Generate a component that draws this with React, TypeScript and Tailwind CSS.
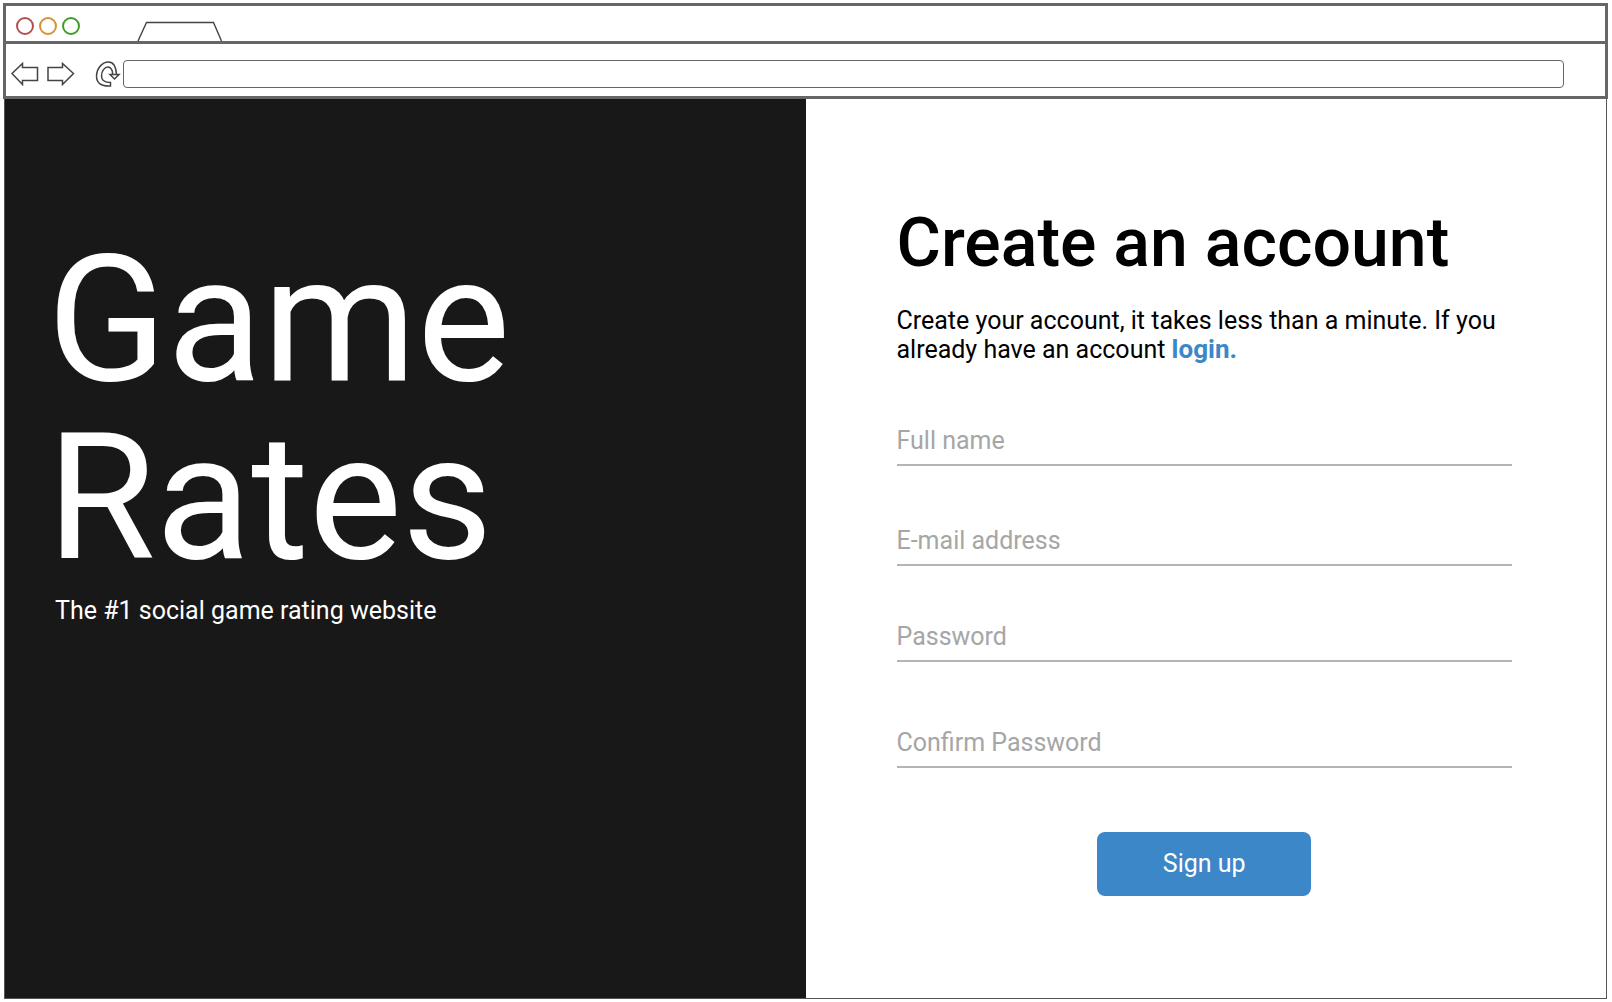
type FieldProps = { id: string; label: string; type: string; className?: string };

function Field({ id, label, type, className = "" }: FieldProps) {
  return (
    <div className={className}>
      <input
        id={id}
        name={id}
        type={type}
        aria-label={label}
        placeholder={label}
        className="block h-12 w-full border-b-2 border-[#b4b4b4] bg-transparent pb-0.5 text-[25px] leading-8 text-black outline-none placeholder:text-[#a6a6a6] placeholder:opacity-100"
      />
    </div>
  );
}

function BrowserBar() {
  return (
    <header className="border-[3px] border-[#666666] bg-white">
      <div className="box-content flex h-[35px] items-end border-b-[3px] border-[#666666]">
        <div className="flex gap-[5px] self-center pt-1 pl-[10px]">
          <span className="size-[18px] rounded-full border-2 border-[#b5504f]" />
          <span className="size-[18px] rounded-full border-2 border-[#d6903a]" />
          <span className="size-[18px] rounded-full border-2 border-[#3f9e2b]" />
        </div>
        <svg className="ml-[57px] h-5 w-[86px]" viewBox="0 0 86 20" fill="none" stroke="#444" strokeWidth="1.4" aria-hidden="true">
          <path d="M1 20 9.500 1.500H76.500L84.500 20" />
        </svg>
      </div>
      <div className="flex h-[52px] items-center pt-[7px] pr-[41px]">
        <button type="button" aria-label="Back" className="ml-[5px]">
          <svg className="block h-6 w-7" viewBox="0 0 28 24" fill="none" stroke="#444" strokeWidth="1.5" aria-hidden="true">
            <path d="M1 11.500 11.500 1.500V5.500H26.500V18.500H11.500V22.500Z" />
          </svg>
        </button>
        <button type="button" aria-label="Forward" className="ml-2">
          <svg className="block h-6 w-7" viewBox="0 0 28 24" fill="none" stroke="#444" strokeWidth="1.5" aria-hidden="true">
            <path d="M26.500 11.500 15.500 1.500V5.500H1V18.500H15.500V22.500Z" />
          </svg>
        </button>
        <button type="button" aria-label="Reload" className="ml-5">
          <svg className="block h-[26px] w-[26px]" viewBox="0 0 26 26" fill="none" stroke="#444" strokeWidth="1.5" aria-hidden="true">
            <path d="M15.500 25C6 25.500 1.500 22 1.500 15C2 6 8 1 13.500 1C18.500 1 21 6 21.500 13.500H24L19.500 18L15 13.500H17.500C18 9 15.500 6 13 6C9.500 6 6.500 10 6.500 15C6.500 19.500 9.500 21.500 15.500 21.500Z M15 13.500H24" />
          </svg>
        </button>
        <input
          type="text"
          aria-label="Address"
          className="ml-0.5 h-7 min-w-0 flex-1 rounded-[4px] border border-[#666666] px-2 outline-none"
        />
      </div>
    </header>
  );
}

export default function App() {
  return (
    <div className="flex min-h-screen flex-col bg-white pt-[3px] pr-1 pb-[3px] pl-[3px] font-['Roboto',sans-serif] text-[25px]">
      <BrowserBar />
      <main className="mx-px grid flex-1 grid-cols-2 border-r border-b border-l border-[#555]">
        <section className="bg-[#181818] pt-[132px] pl-[42px] text-white">
          <h1 className="text-[176px] leading-[178px]">
            Game
            <br />
            Rates
          </h1>
          <p className="mt-[10px] pl-2 leading-7">The #1 social game rating website</p>
        </section>
        <section className="pt-[100px] pr-[94px] pl-[91px]">
          <h2 className="text-[68px] leading-[88px] font-medium text-black">Create an account</h2>
          <p className="mt-5 leading-7 text-black">
            Create your account, it takes less than a minute. If you already have an account{" "}
            <a href="#login" className="text-[26px] font-bold text-[#3b87c8]">
              login.
            </a>
          </p>
          <form className="flex flex-col" onSubmit={(event) => event.preventDefault()}>
            <Field id="full-name" label="Full name" type="text" className="mt-[54px]" />
            <Field id="email" label="E-mail address" type="email" className="mt-[52px]" />
            <Field id="password" label="Password" type="password" className="mt-12" />
            <Field id="confirm-password" label="Confirm Password" type="password" className="mt-[58px]" />
            <button
              type="submit"
              className="mt-16 h-16 w-[214px] self-center rounded-lg bg-[#3b87c8] text-white"
            >
              Sign up
            </button>
          </form>
        </section>
      </main>
    </div>
  );
}
